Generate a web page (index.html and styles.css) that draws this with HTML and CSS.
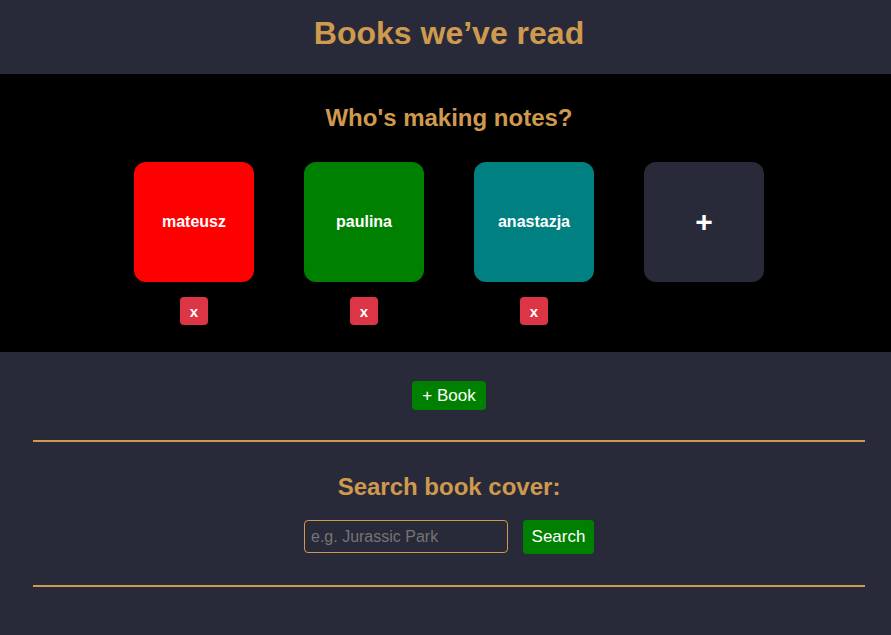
FILE: index.html
```html
<!DOCTYPE html>
<html lang="en">
<head>
<meta charset="utf-8">
<title>Books we've read</title>
<link rel="stylesheet" href="styles.css">
</head>
<body>
<div class="page">
  <header class="header">
    <h1 class="title">Books we’ve read</h1>
  </header>
  <section class="users">
    <h2 class="users-title">Who's making notes?</h2>
    <div class="user-row">
      <div class="user-col">
        <div class="user-card red">mateusz</div>
        <button class="remove">x</button>
      </div>
      <div class="user-col">
        <div class="user-card green">paulina</div>
        <button class="remove">x</button>
      </div>
      <div class="user-col">
        <div class="user-card teal">anastazja</div>
        <button class="remove">x</button>
      </div>
      <div class="user-col">
        <div class="user-card add">+</div>
      </div>
    </div>
  </section>
  <main class="main">
    <div class="add-book-row">
      <button class="btn-green add-book">+ Book</button>
    </div>
    <hr class="divider">
    <h2 class="search-title">Search book cover:</h2>
    <div class="search-row">
      <input class="search-input" type="text" placeholder="e.g. Jurassic Park">
      <button class="btn-green search-btn">Search</button>
    </div>
    <hr class="divider">
  </main>
</div>
</body>
</html>
```

FILE: styles.css
```css
html, body {
  margin: 0;
  padding: 0;
  background: #292a39;
  font-family: "Liberation Sans", Arial, sans-serif;
  overflow: hidden;
}
.page {
  padding-left: 7px;
  background: #292a39;
  min-height: 635px;
}
.header {
  height: 74px;
  display: flex;
  align-items: center;
  justify-content: center;
}
.title {
  margin: 0;
  color: #cf9a4e;
  font-size: 32px;
  font-weight: bold;
  line-height: 36px;
  padding-bottom: 8px;
}
.users {
  background: #000;
  margin-left: -7px;
  padding: 30px 0 27px 7px;
  display: flex;
  flex-direction: column;
  align-items: center;
}
.users-title {
  margin: 0 0 30px;
  color: #cf9a4e;
  font-size: 24px;
  line-height: 28px;
  font-weight: bold;
}
.user-row {
  display: flex;
  gap: 50px;
}
.user-col {
  width: 120px;
  display: flex;
  flex-direction: column;
  align-items: center;
  gap: 15px;
}
.user-card {
  width: 120px;
  height: 120px;
  border-radius: 12px;
  display: flex;
  align-items: center;
  justify-content: center;
  color: #fff;
  font-weight: bold;
  font-size: 16px;
}
.red { background: #ff0000; }
.green { background: #008000; }
.teal { background: #008080; }
.add {
  background: #292a39;
  font-size: 30px;
}
.remove {
  width: 28px;
  height: 28px;
  border: none;
  border-radius: 4px;
  background: #dc3545;
  color: #fff;
  font-family: "Liberation Sans", Arial, sans-serif;
  font-weight: bold;
  font-size: 15px;
  padding: 0;
}
.main {
  padding-top: 29px;
}
.add-book-row {
  display: flex;
  justify-content: center;
}
.btn-green {
  background: #008000;
  color: #fff;
  border: none;
  border-radius: 4px;
  font-family: "Liberation Sans", Arial, sans-serif;
  font-size: 17px;
}
.add-book {
  width: 74px;
  height: 29px;
  padding: 0;
}
.divider {
  margin: 30px 26px 0;
  border: none;
  height: 2px;
  background: #cf9a4e;
}
.search-title {
  margin: 31px 0 0;
  text-align: center;
  color: #cf9a4e;
  font-size: 24px;
  line-height: 28px;
  font-weight: bold;
}
.search-row {
  display: flex;
  justify-content: center;
  gap: 15px;
  margin-top: 19px;
}
.search-input {
  width: 204px;
  height: 33px;
  box-sizing: border-box;
  background: transparent;
  border: 1px solid #cf9a4e;
  border-radius: 4px;
  padding: 0 6px;
  font-family: "Liberation Sans", Arial, sans-serif;
  font-size: 16px;
  color: #fff;
}
.search-input::placeholder {
  color: #757575;
}
.search-btn {
  width: 71px;
  height: 34px;
  padding: 0;
}
.search-row + .divider {
  margin-top: 31px;
}
```
